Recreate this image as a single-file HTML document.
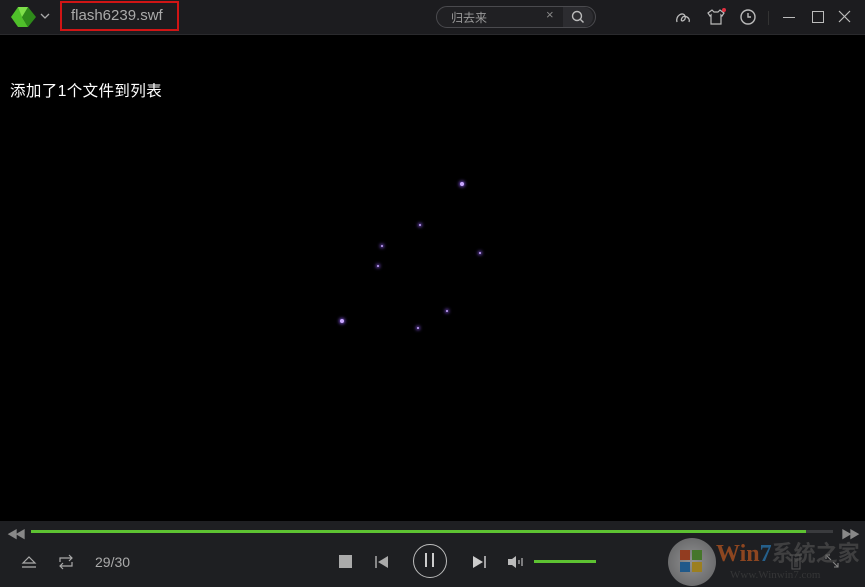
<html><head><style>
body{margin:0;width:865px;height:587px;background:#000;position:relative;overflow:hidden;font-family:"Liberation Sans","Noto Sans CJK SC",sans-serif}
.a{position:absolute;white-space:nowrap}
.dot{position:absolute;border-radius:50%;background:#c9a8ff;box-shadow:0 0 3px 1px #7a4fd0}
</style></head><body>
<div class="a" style="left:0;top:0;width:865px;height:34px;background:#1c1c1f;border-bottom:1px solid #2a2a2d"></div>
<svg class="a" style="left:8px;top:5px" width="32" height="24" viewBox="0 0 32 24"><path d="M3 12 L10 2 L20 2 L14 12 L20 22 L10 22Z" fill="#4fbf2a"/><path d="M14 12 L20 2 L28 12 L20 22Z" fill="#2e8a1a"/><path d="M10 2 L20 2 L14 12Z" fill="#7ee04a"/></svg>
<svg class="a" style="left:40px;top:12px" width="10" height="8"><path d="M1 2 L5 6 L9 2" stroke="#aaa" fill="none" stroke-width="1.3"/></svg>
<div class="a" style="left:60px;top:1px;width:115px;height:26px;border:2px solid #d01515"></div>
<div class="a" style="left:71px;top:7px;color:#aaa;font-size:15px">flash6239.swf</div>
<div class="a" style="left:436px;top:6px;width:158px;height:20px;border:1px solid #4a4a4e;border-radius:11px;background:#202023"></div>
<div class="a" style="left:563px;top:7px;width:30px;height:20px;background:#2c2c30;border-radius:0 10px 10px 0"></div>
<div class="a" style="left:451px;top:9px;color:#999;font-size:12px">归去来</div>
<div class="a" style="left:546px;top:7px;color:#888;font-size:13px">×</div>
<svg class="a" style="left:571px;top:10px" width="14" height="14"><circle cx="6" cy="6" r="4.5" stroke="#bbb" fill="none" stroke-width="1.4"/><path d="M9.5 9.5 L12.5 12.5" stroke="#bbb" stroke-width="1.4"/></svg>
<svg class="a" style="left:674px;top:8px" width="20" height="18"><path d="M3 14 C1 8 9 3 11 8 C13 13 5 15 8 10 C10 6 17 10 15 14" stroke="#bbb" fill="none" stroke-width="1.3"/></svg>
<svg class="a" style="left:706px;top:8px" width="20" height="18"><path d="M2 5 L6 2 L8 4 L12 4 L14 2 L18 5 L16 8 L15 7 L15 16 L5 16 L5 7 L4 8Z" stroke="#bbb" fill="none" stroke-width="1.2"/><circle cx="18" cy="2" r="2" fill="#e03040"/></svg>
<svg class="a" style="left:739px;top:8px" width="18" height="18"><circle cx="9" cy="9" r="7" stroke="#bbb" fill="none" stroke-width="1.4"/><path d="M9 5 L9 9 L12 9" stroke="#bbb" fill="none" stroke-width="1.4"/></svg>
<div class="a" style="left:768px;top:11px;width:1px;height:14px;background:#333"></div>
<div class="a" style="left:783px;top:17px;width:12px;height:1px;background:#bbb"></div>
<div class="a" style="left:812px;top:11px;width:10px;height:10px;border:1px solid #bbb"></div>
<svg class="a" style="left:838px;top:10px" width="14" height="14"><path d="M1 1 L12 12 M12 1 L1 12" stroke="#bbb" stroke-width="1.2"/></svg>
<div class="a" style="left:10px;top:79px;color:#fff;font-size:15.5px;letter-spacing:0.4px">添加了1个文件到列表</div>
<div class="dot" style="left:460px;top:182px;width:4px;height:4px"></div>
<div class="dot" style="left:419px;top:224px;width:2px;height:2px"></div>
<div class="dot" style="left:381px;top:245px;width:2px;height:2px"></div>
<div class="dot" style="left:479px;top:252px;width:2px;height:2px"></div>
<div class="dot" style="left:377px;top:265px;width:2px;height:2px"></div>
<div class="dot" style="left:446px;top:310px;width:2px;height:2px"></div>
<div class="dot" style="left:340px;top:319px;width:4px;height:4px"></div>
<div class="dot" style="left:417px;top:327px;width:2px;height:2px"></div>
<div class="a" style="left:0;top:521px;width:865px;height:66px;background:#1e1f22"></div>
<div class="a" style="left:7px;top:526px;color:#888;font-size:11px;letter-spacing:-3px">◀◀</div>
<div class="a" style="left:841px;top:526px;color:#888;font-size:11px;letter-spacing:-3px">▶▶</div>
<div class="a" style="left:31px;top:530px;width:802px;height:3px;background:#3a3b3e"></div>
<div class="a" style="left:31px;top:530px;width:775px;height:3px;background:#5dc232"></div>
<svg class="a" style="left:20px;top:554px" width="18" height="16"><path d="M3 9 L9 3 L15 9Z" stroke="#aaa" fill="none" stroke-width="1.2"/><path d="M2 13 L16 13" stroke="#aaa" stroke-width="1.3"/></svg>
<svg class="a" style="left:57px;top:554px" width="18" height="16"><path d="M3 8 L3 4 L15 4 M12 1 L15 4 L12 7 M15 8 L15 12 L3 12 M6 9 L3 12 L6 15" stroke="#aaa" fill="none" stroke-width="1.2"/></svg>
<div class="a" style="left:95px;top:554px;color:#aaa;font-size:14px">29/30</div>
<div class="a" style="left:339px;top:555px;width:13px;height:13px;background:#aaa"></div>
<svg class="a" style="left:374px;top:555px" width="16" height="14"><path d="M2 1 L2 13" stroke="#aaa" stroke-width="1.5"/><path d="M14 1 L4 7 L14 13Z" fill="#aaa"/></svg>
<div class="a" style="left:413px;top:544px;width:32px;height:32px;border:1.5px solid #bbb;border-radius:50%"></div>
<div class="a" style="left:425px;top:553px;width:2px;height:14px;background:#ccc"></div>
<div class="a" style="left:432px;top:553px;width:2px;height:14px;background:#ccc"></div>
<svg class="a" style="left:471px;top:555px" width="16" height="14"><path d="M2 1 L12 7 L2 13Z" fill="#ccc"/><path d="M14 1 L14 13" stroke="#ccc" stroke-width="1.5"/></svg>
<svg class="a" style="left:507px;top:555px" width="18" height="14"><path d="M1 4 L5 4 L9 1 L9 13 L5 10 L1 10Z" fill="#bbb"/><path d="M12 5 L12 9 M15 3 L15 11" stroke="#bbb" stroke-width="1.2"/></svg>
<div class="a" style="left:534px;top:560px;width:62px;height:3px;background:#5dc232"></div>
<svg class="a" style="left:788px;top:553px" width="16" height="18"><path d="M2 2 L14 2 M4 2 L4 16 L12 16 L12 2 M7 5 L7 14 M9 5 L9 14" stroke="#555" fill="none" stroke-width="1"/></svg>
<svg class="a" style="left:824px;top:553px" width="16" height="16"><path d="M2 6 L2 2 L6 2 M2 2 L7 7 M14 10 L14 14 L10 14 M14 14 L9 9" stroke="#888" fill="none" stroke-width="1.1"/></svg>
<div style="position:absolute;left:0;top:0;width:865px;height:587px;opacity:0.6">
<div class="a" style="left:668px;top:538px;width:48px;height:48px;border-radius:50%;background:radial-gradient(circle,#ddd,#888)"></div>
<div class="a" style="left:680px;top:550px;width:10px;height:10px;background:#e05020"></div>
<div class="a" style="left:692px;top:550px;width:10px;height:10px;background:#60b030"></div>
<div class="a" style="left:680px;top:562px;width:10px;height:10px;background:#2080d0"></div>
<div class="a" style="left:692px;top:562px;width:10px;height:10px;background:#f0c020"></div>
<div class="a" style="left:716px;top:538px;color:#d86020;font-size:24px;font-weight:bold;font-family:'Liberation Serif',serif;line-height:28px">Win<span style="color:#2a8ad0">7</span><span style="color:#555;font-size:22px;font-family:'Noto Sans CJK SC',sans-serif">系统之家</span></div>
<div class="a" style="left:730px;top:569px;color:#444;font-size:11px;font-family:'Liberation Serif',serif">Www.Winwin7.com</div>
</div>
</body></html>
